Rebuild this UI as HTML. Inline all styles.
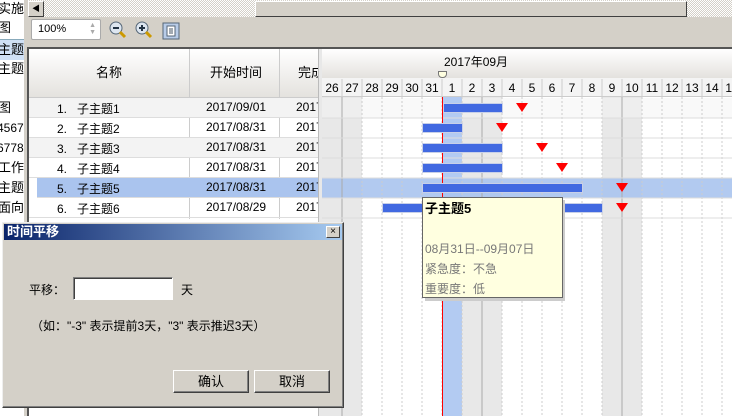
<!DOCTYPE html>
<html><head><meta charset="utf-8"><style>
*{margin:0;padding:0;box-sizing:border-box}
body{width:732px;height:416px;overflow:hidden;position:relative;background:#fff;font-family:"Liberation Sans","Noto Sans CJK SC",sans-serif;font-size:12px;color:#000}
.a{position:absolute}
.chk{background-color:#e8e6e0;background-image:repeating-conic-gradient(#d4d0c8 0 25%,#fff 0 50%);background-size:2px 2px}
.row{position:absolute;left:29px;width:293px;height:20px;border-bottom:1px solid #ddd}
.row span{position:absolute;top:2px}
.tri{position:absolute;width:0;height:0;border-left:6px solid transparent;border-right:6px solid transparent;border-top:9px solid #f00}
.bar{position:absolute;height:10px;background:#4169e1;border:1px solid #c8d0e8}
.btn{position:absolute;width:76px;height:23px;background:#d4d0c8;border:1px solid;border-color:#fff #404040 #404040 #fff;box-shadow:inset -1px -1px #808080;text-align:center;line-height:21px;font-size:13px}
</style></head><body>
<div class="a" style="left:0;top:0;width:27px;height:416px;background:#fff;font-size:13px;line-height:20px;overflow:hidden">
<div class="a" style="top:-1px;left:-2px;white-space:nowrap">实施计</div>
<div class="a" style="top:18px;left:-2px">图</div>
<div class="a" style="top:39px;left:-2px;width:29px;background:#cfe0f5;border-top:1px solid #8ab">主题</div>
<div class="a" style="top:59px;left:-2px">主题</div>
<div class="a" style="top:98px;left:-2px">图</div>
<div class="a" style="top:118px;left:-3px;font-size:12px">4567</div>
<div class="a" style="top:138px;left:-3px;font-size:12px">6778</div>
<div class="a" style="top:158px;left:-2px;white-space:nowrap">工作计</div>
<div class="a" style="top:178px;left:-2px">主题</div>
<div class="a" style="top:198px;left:-2px;white-space:nowrap">面向计</div>
</div>
<div class="a" style="left:24px;top:0;width:4px;height:416px;background:#d4d0c8"></div>
<div class="a" style="left:27px;top:0;width:705px;height:416px;background:#d4d0c8"></div>
<div class="a chk" style="left:28px;top:0;width:704px;height:17px"></div>
<div class="a" style="left:28px;top:1px;width:16px;height:16px;background:#d4d0c8;border:1px solid;border-color:#fff #404040 #404040 #fff;font-size:8px;line-height:14px;text-align:center">◀</div>
<div class="a" style="left:255px;top:1px;width:432px;height:16px;background:#d4d0c8;border:1px solid;border-color:#fff #404040 #404040 #fff"></div>
<div class="a" style="left:31px;top:19px;width:70px;height:21px;background:#fff;border:1px solid #aaa;border-radius:2px;padding:3px 6px;font-size:11px">100%<span class="a" style="right:4px;top:2px;color:#aaa;font-size:7px;line-height:7px">▲<br>▼</span></div>
<svg class="a" style="left:108px;top:20px" width="20" height="20"><circle cx="8" cy="8" r="6" fill="#dde6f0" stroke="#567" /><rect x="5" y="7" width="6" height="2" fill="#234"/><path d="M12 12l5 5" stroke="#c90" stroke-width="3"/></svg>
<svg class="a" style="left:134px;top:20px" width="20" height="20"><circle cx="8" cy="8" r="6" fill="#dde6f0" stroke="#567" /><rect x="5" y="7" width="6" height="2" fill="#234"/><rect x="7" y="5" width="2" height="6" fill="#234"/><path d="M12 12l5 5" stroke="#c90" stroke-width="3"/></svg>
<svg class="a" style="left:162px;top:22px" width="18" height="18"><rect x="1" y="1" width="16" height="16" fill="#b8cce8" stroke="#567"/><rect x="5" y="4" width="8" height="10" fill="#fff" stroke="#567"/><path d="M7 7h4M7 9h4M7 11h4" stroke="#456"/></svg>
<div class="a" style="left:27px;top:47px;width:705px;height:369px;background:#fff;border-top:2px solid #555;border-left:2px solid #555"></div>
<div class="a" style="left:29px;top:49px;width:289px;height:49px;background:linear-gradient(#fff,#e4e2de);border-bottom:1px solid #ccc"></div>
<div class="a" style="left:189px;top:49px;width:1px;height:170px;background:#ccc"></div>
<div class="a" style="left:279px;top:49px;width:1px;height:170px;background:#ccc"></div>
<div class="a" style="left:96px;top:62px;font-size:13px">名称</div>
<div class="a" style="left:210px;top:62px;font-size:13px">开始时间</div>
<div class="a" style="left:298px;top:62px;font-size:13px;width:20px;overflow:hidden;white-space:nowrap">完成</div>
<div class="row" style="top:98px;background:#f3f3f3"><span style="left:28px">1.&nbsp;&nbsp; 子主题1</span><span style="left:177px">2017/09/01</span><span style="left:267px">2017</span></div>
<div class="row" style="top:118px"><span style="left:28px">2.&nbsp;&nbsp; 子主题2</span><span style="left:177px">2017/08/31</span><span style="left:267px">2017</span></div>
<div class="row" style="top:138px;background:#f3f3f3"><span style="left:28px">3.&nbsp;&nbsp; 子主题3</span><span style="left:177px">2017/08/31</span><span style="left:267px">2017</span></div>
<div class="row" style="top:158px"><span style="left:28px">4.&nbsp;&nbsp; 子主题4</span><span style="left:177px">2017/08/31</span><span style="left:267px">2017</span></div>
<div class="row" style="top:178px;background:#aac4ee;left:37px;width:285px"><span style="left:20px">5.&nbsp;&nbsp; 子主题5</span><span style="left:169px">2017/08/31</span><span style="left:259px">2017</span></div>
<div class="row" style="top:198px"><span style="left:28px">6.&nbsp;&nbsp; 子主题6</span><span style="left:177px">2017/08/29</span><span style="left:267px">2017</span></div>
<div class="a" style="left:318px;top:49px;width:4px;height:367px;background:#e8e8e8;border-left:1px solid #bbb"></div>
<div class="a" style="left:322px;top:49px;width:410px;height:367px;overflow:hidden">
<div class="a" style="left:0;top:0;width:410px;height:29px;background:linear-gradient(#fff,#e4e2de)"></div>
<div class="a" style="left:122px;top:4px;font-size:12px">2017年09月</div>
<div class="a" style="left:116px;top:22px;width:9px;height:7px;background:#ffffe0;border:1px solid #777;border-radius:0 0 4px 4px"></div>
<div class="a" style="left:0;top:29px;width:410px;height:19px;background:#f4f4f4;border-bottom:1px solid #ccc"></div>
<svg class="a" style="left:0;top:0" width="410" height="367">
<g fill="#e8e8e8"><rect x="0" y="48" width="40" height="319"/><rect x="140" y="48" width="40" height="319"/><rect x="280" y="48" width="40" height="319"/></g>
<rect x="0" y="49" width="410" height="20" fill="#f3f3f3" opacity=".5"/>
<rect x="121" y="48" width="19" height="319" fill="#b3cbf2"/>
<rect x="0" y="129" width="410" height="20" fill="#aac4ee" opacity=".9"/>
<g stroke="#ccc" stroke-dasharray="2,2">
<path d="M40 48V367M60 48V367M80 48V367M100 48V367M120 48V367M140 48V367M180 48V367M200 48V367M220 48V367M240 48V367M260 48V367M280 48V367M320 48V367M340 48V367M360 48V367M380 48V367M400 48V367"/></g>
<g stroke="#aaa"><path d="M20 48V367M160 48V367M300 48V367"/></g>
<g stroke="#ddd"><path d="M0 69H410M0 89H410M0 109H410M0 129H410M0 149H410M0 169H410"/></g>
<g stroke="#ccc"><path d="M20 30v17M40 30v17M60 30v17M80 30v17M100 30v17M120 30v17M140 30v17M160 30v17M180 30v17M200 30v17M220 30v17M240 30v17M260 30v17M280 30v17M300 30v17M320 30v17M340 30v17M360 30v17M380 30v17M400 30v17"/></g>
<path d="M120.5 48V367" stroke="#f00"/>
<g font-family="Liberation Sans, sans-serif" font-size="12" text-anchor="middle">
<text x="10" y="43">26</text><text x="30" y="43">27</text><text x="50" y="43">28</text><text x="70" y="43">29</text><text x="90" y="43">30</text><text x="110" y="43">31</text><text x="130" y="43">1</text><text x="150" y="43">2</text><text x="170" y="43">3</text><text x="190" y="43">4</text><text x="210" y="43">5</text><text x="230" y="43">6</text><text x="250" y="43">7</text><text x="270" y="43">8</text><text x="290" y="43">9</text><text x="310" y="43">10</text><text x="330" y="43">11</text><text x="350" y="43">12</text><text x="370" y="43">13</text><text x="390" y="43">14</text><text x="410" y="43">15</text></g>
</svg>
</div>
<div class="bar" style="top:103px;left:443px;width:60px"></div>
<div class="bar" style="left:422px;top:123px;width:41px"></div>
<div class="bar" style="left:422px;top:143px;width:81px"></div>
<div class="bar" style="left:422px;top:163px;width:81px"></div>
<div class="bar" style="left:422px;top:183px;width:161px"></div>
<div class="bar" style="left:382px;top:203px;width:221px"></div>
<div class="tri" style="left:516px;top:103px"></div>
<div class="tri" style="left:496px;top:123px"></div>
<div class="tri" style="left:536px;top:143px"></div>
<div class="tri" style="left:556px;top:163px"></div>
<div class="tri" style="left:616px;top:183px"></div>
<div class="tri" style="left:616px;top:203px"></div>
<div class="a" style="left:425px;top:200px;width:140px;height:101px;background:#ccc"></div>
<div class="a" style="left:422px;top:197px;width:141px;height:101px;background:#ffffe0;border:1px solid #666;padding:1px 2px;font-size:12px;line-height:20px;color:#777">
<div style="color:#000;font-weight:bold;font-size:13px">子主题5</div>
<div style="height:20px"></div>
<div>08月31日--09月07日</div><div>紧急度：不急</div><div>重要度：低</div></div>
<div class="a" style="left:2px;top:222px;width:342px;height:186px;background:#d4d0c8;border:1px solid;border-color:#eee #404040 #404040 #eee;box-shadow:inset -1px -1px #808080"></div>
<div class="a" style="left:4px;top:224px;width:338px;height:16px;background:linear-gradient(90deg,#0a246a,#a6caf0);color:#fff;font-weight:bold;font-size:13px;line-height:16px;padding-left:3px">时间平移</div>
<div class="a" style="left:326px;top:226px;width:14px;height:12px;background:#d4d0c8;border:1px solid;border-color:#fff #404040 #404040 #fff;font-size:10px;line-height:10px;text-align:center">×</div>
<div class="a" style="left:29px;top:281px;font-size:12px">平移：</div>
<div class="a" style="left:73px;top:277px;width:100px;height:23px;background:#fff;border:1px solid;border-color:#808080 #fff #fff #808080;box-shadow:inset 1px 1px #404040"></div>
<div class="a" style="left:181px;top:281px;font-size:12px">天</div>
<div class="a" style="left:31px;top:317px;font-size:12px">（如："-3" 表示提前3天，"3" 表示推迟3天）</div>
<div class="btn" style="left:173px;top:370px">确认</div>
<div class="btn" style="left:254px;top:370px">取消</div>
</body></html>
